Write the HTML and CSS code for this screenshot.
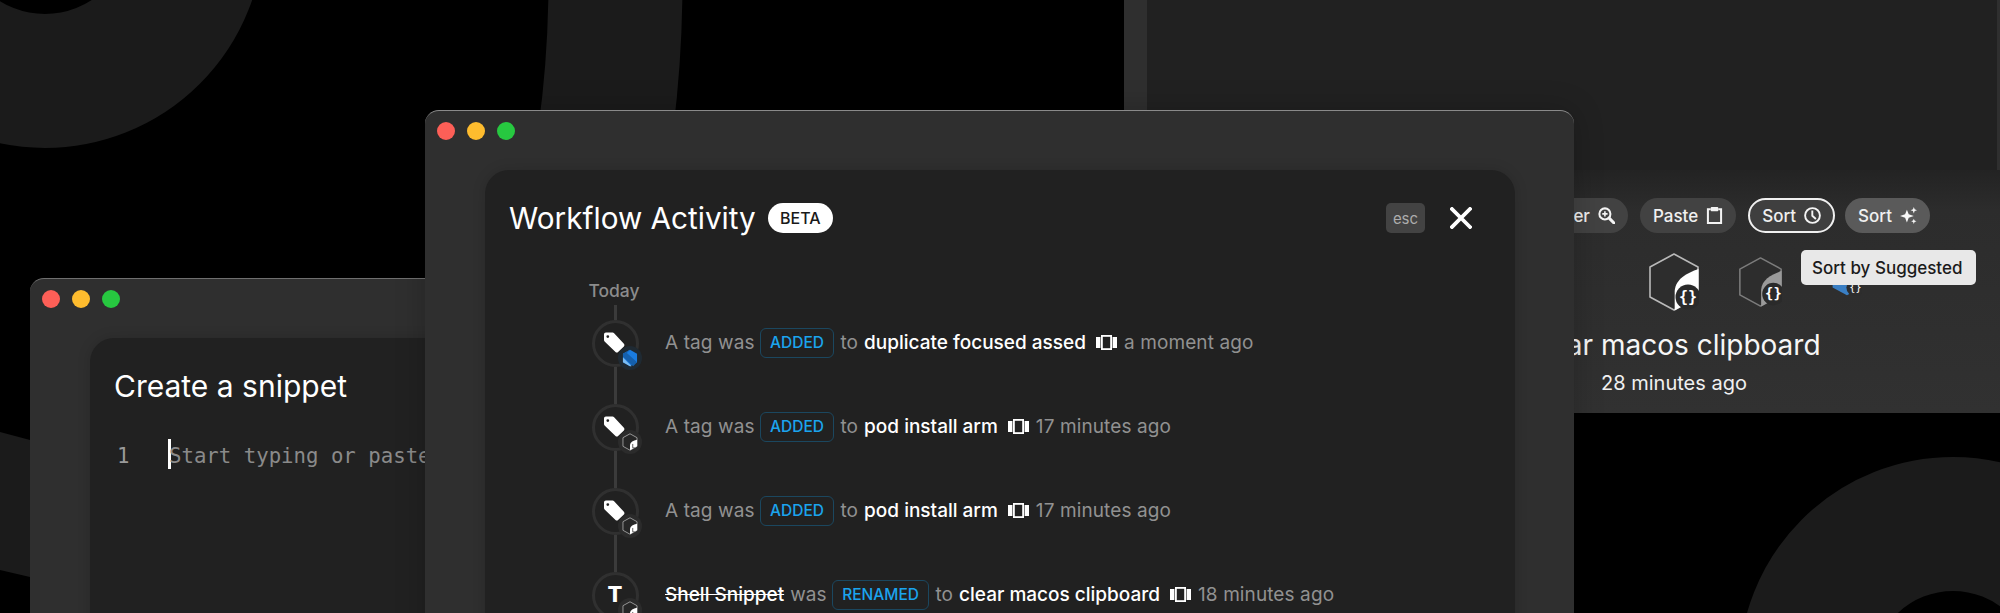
FILE: index.html
```html
<!DOCTYPE html>
<html lang="en">
<head>
<meta charset="utf-8">
<title>Workflow Activity</title>
<link rel="stylesheet" href="styles.css">
</head>
<body>
<svg width="0" height="0" class="defs" aria-hidden="true">
  <symbol id="movie" viewBox="0 0 21 15">
    <rect x="0" y="2" width="4.400" height="11" fill="#fff"/>
    <rect x="5.900" y=".9" width="9.200" height="13.200" fill="none" stroke="#fff" stroke-width="1.800"/>
    <rect x="16.600" y="2" width="4.400" height="11" fill="#fff"/>
  </symbol>
  <symbol id="tag" viewBox="0 0 22 21">
    <path fill="#fff" fill-rule="evenodd" d="M1 2.500C1 1.400 1.800.6 2.900.6H9.600c.6 0 1.100.2 1.500.6l9.800 10.600c.7.8.7 1.900 0 2.600l-5.800 5.600c-.8.7-1.900.7-2.600-.1L1.600 9.400C1.200 9 1 8.500 1 7.900ZM4.800 3.200a1.400 1.400 0 1 0 0 2.800 1.400 1.400 0 0 0 0-2.800Z"/>
  </symbol>
  <symbol id="minihex" viewBox="0 0 20 23">
    <path d="M10 1 19 6V17L10 22 1 17V6Z" fill="#262626" stroke="#a8a8a8" stroke-width="1.100" stroke-linejoin="round"/>
    <path d="M19 8.500C14 9.500 10.500 11.500 10 15V22L19 17Z" fill="#fff"/>
    <path d="M13.500 14V19H16" fill="none" stroke="#333" stroke-width="1"/>
  </symbol>
  <symbol id="bluehex" viewBox="0 0 20 23">
    <path d="M10 1 19 6V17L10 22 1 17V6Z" fill="#1a7ce0"/>
    <path d="M10 1 1 6V10L14 22 19 17 6 5Z" fill="#1560ad"/>
    <path d="M1 11 12 22H10L1 17Z" fill="#7cbcf2"/>
  </symbol>
</svg>

<svg class="backdrop" viewBox="0 0 2000 613" aria-hidden="true">
  <circle class="ring" cx="45" cy="-71" r="152"/>
  <circle class="ring" cx="-517" cy="-20" r="1132.500"/>
  <circle class="ring" cx="1953" cy="671" r="147"/>
  <polygon class="ring-fill" points="0,432 30,440 30,577 0,570"/>
</svg>

<section class="window back-window">
  <div class="back-panel"></div>
  <div class="back-footer">
    <div class="toolbar">
      <span class="pill">Filter
        <svg class="pill-icon" viewBox="0 0 16 16"><circle cx="6.500" cy="6.500" r="5.200" fill="none" stroke="#f4f4f4" stroke-width="1.900"/><path d="M10.500 10.500 15 15" stroke="#f4f4f4" stroke-width="2.800" stroke-linecap="round"/><path d="M6.500 4V9M4 6.500H9" stroke="#f4f4f4" stroke-width="1.500"/></svg>
      </span>
      <span class="pill">Paste
        <svg class="pill-icon" viewBox="0 0 16 16"><path d="M4.500 2.200H1.800V15.100H14.200V2.200H11.500" fill="none" stroke="#f4f4f4" stroke-width="1.900"/><rect x="4.500" y="0" width="7" height="4" rx=".7" fill="#f4f4f4"/></svg>
      </span>
      <span class="pill pill-active">Sort
        <svg class="pill-icon" viewBox="0 0 17 17"><circle cx="8.500" cy="8.500" r="7.400" fill="none" stroke="#f4f4f4" stroke-width="1.900"/><path d="M8.300 3.600V8.800L11.900 12" fill="none" stroke="#f4f4f4" stroke-width="1.900"/></svg>
      </span>
      <span class="pill pill-light">Sort
        <svg class="pill-icon" viewBox="0 0 16 16"><path d="M6.500 2.500 8.200 6.900 13 8.500 8.200 10.100 6.500 14.500 4.800 10.100 0 8.500 4.800 6.900Z" fill="#f7f7f7"/><path d="M13 0 13.800 2.200 16 3 13.800 3.800 13 6 12.200 3.800 10 3 12.200 2.200Z" fill="#f7f7f7"/><path d="M13 11 13.700 12.800 15.500 13.500 13.700 14.200 13 16 12.300 14.200 10.500 13.500 12.300 12.800Z" fill="#f7f7f7"/></svg>
      </span>
    </div>
    <div class="hex-row">
      <svg class="hex hex-lg" viewBox="0 0 50 58">
        <path d="M25 1 49 14V44L25 57 1 44V14Z" fill="#2d2d2d" stroke="#b9b9b9" stroke-width="1.600" stroke-linejoin="round"/>
        <path d="M49.500 16C38 20 26.500 26 25.700 38V57.500L49.500 44Z" fill="#fff"/>
        <circle cx="39" cy="44" r="12.500" fill="#2a2a2a"/>
        <text x="39" y="49" class="brace">{}</text>
      </svg>
      <svg class="hex hex-md" viewBox="0 0 50 58">
        <path d="M25 1 49 14V44L25 57 1 44V14Z" fill="#2d2d2d" stroke="#7c7c7c" stroke-width="1.800" stroke-linejoin="round"/>
        <path d="M49.500 16C38 20 26.500 26 25.700 38V57.500L49.500 44Z" fill="#9a9a9a"/>
        <circle cx="40" cy="43" r="13" fill="#2a2a2a"/>
        <text x="40" y="48" class="brace">{}</text>
      </svg>
      <svg class="hex hex-sm" viewBox="0 0 50 58">
        <path d="M25 1 49 14V44L25 57 1 44V14Z" fill="#3a7fc4"/>
        <circle cx="39" cy="44" r="15" fill="#2d2d2d"/>
        <text x="39" y="49.500" class="brace">{}</text>
      </svg>
    </div>
    <h2 class="asset-title">clear macos clipboard</h2>
    <p class="asset-time">28 minutes ago</p>
    <div class="tooltip">Sort by Suggested</div>
  </div>
</section>

<section class="window snippet-window">
  <div class="traffic"><i class="dot red"></i><i class="dot amber"></i><i class="dot green"></i></div>
  <div class="panel snippet-panel">
    <h1 class="title">Create a snippet</h1>
    <div class="editor">
      <span class="line-no">1</span>
      <span class="caret"></span>
      <span class="placeholder">Start typing or paste</span>
    </div>
  </div>
</section>

<section class="window main-window">
  <div class="traffic"><i class="dot red"></i><i class="dot amber"></i><i class="dot green"></i></div>
  <div class="panel main-panel">
    <header class="main-head">
      <h1 class="title title-main">Workflow Activity</h1>
      <span class="beta">BETA</span>
      <span class="esc">esc</span>
      <svg class="close" viewBox="0 0 22 22"><path d="M2 2 20 20M20 2 2 20" stroke="#fff" stroke-width="3.800" stroke-linecap="square"/></svg>
    </header>
    <div class="timeline">
      <div class="day"><span class="day-label">Today</span><i class="stem"></i></div>

      <div class="row">
        <div class="node-col">
          <div class="node">
            <svg class="tag"><use href="#tag"/></svg>
            <span class="mini mini-blue"><svg><use href="#bluehex"/></svg></span>
          </div>
          <i class="link"></i>
        </div>
        <div class="line">
          <span class="muted">A tag was</span><span class="chip">ADDED</span><span class="muted">to</span><span class="name">duplicate focused assed</span>
          <svg class="movie"><use href="#movie"/></svg><span class="muted">a moment ago</span>
        </div>
      </div>

      <div class="row">
        <div class="node-col">
          <div class="node">
            <svg class="tag"><use href="#tag"/></svg>
            <span class="mini"><svg><use href="#minihex"/></svg></span>
          </div>
          <i class="link"></i>
        </div>
        <div class="line">
          <span class="muted">A tag was</span><span class="chip">ADDED</span><span class="muted">to</span><span class="name">pod install arm</span>
          <svg class="movie"><use href="#movie"/></svg><span class="muted">17 minutes ago</span>
        </div>
      </div>

      <div class="row">
        <div class="node-col">
          <div class="node">
            <svg class="tag"><use href="#tag"/></svg>
            <span class="mini"><svg><use href="#minihex"/></svg></span>
          </div>
          <i class="link"></i>
        </div>
        <div class="line">
          <span class="muted">A tag was</span><span class="chip">ADDED</span><span class="muted">to</span><span class="name">pod install arm</span>
          <svg class="movie"><use href="#movie"/></svg><span class="muted">17 minutes ago</span>
        </div>
      </div>

      <div class="row">
        <div class="node-col">
          <div class="node">
            <span class="node-t">T</span>
            <span class="mini"><svg><use href="#minihex"/></svg></span>
          </div>
        </div>
        <div class="line">
          <span class="name strike">Shell Snippet</span><span class="muted">was</span><span class="chip">RENAMED</span><span class="muted">to</span><span class="name">clear macos clipboard</span>
          <svg class="movie"><use href="#movie"/></svg><span class="muted">18 minutes ago</span>
        </div>
      </div>
    </div>
  </div>
</section>
</body>
</html>
```
FILE: styles.css
```css
* { box-sizing: border-box; }
html, body { margin: 0; height: 100%; }
body {
  position: relative;
  width: 2000px;
  height: 613px;
  overflow: hidden;
  background: #000;
  color: #fff;
  font-family: Inter, "Liberation Sans", sans-serif;
}
.defs { position: absolute; }
.backdrop { position: absolute; inset: 0; width: 2000px; height: 613px; }
.ring { fill: none; stroke: #1b1b1b; stroke-width: 134; }
.ring-fill { fill: #1b1b1b; }

.window {
  position: absolute;
  background: #2f2f2f;
  border-radius: 14px 14px 0 0;
}

/* back window, top right */
.back-window {
  left: 1124px;
  top: -200px;
  width: 1100px;
  height: 613px;
  border-radius: 0;
  display: flex;
  flex-direction: column;
}
.back-panel {
  flex: none;
  height: 370px;
  margin: 0 227px 0 23px;
  background: #212121;
}
.back-footer {
  position: relative;
  flex: 1;
  background: linear-gradient(#232323 0, #2c2c2c 40px, #313131 100%);
}
.toolbar {
  display: flex;
  justify-content: flex-end;
  gap: 12px;
  padding: 28px 294px 0 0;
}
.pill {
  display: flex;
  align-items: center;
  gap: 8px;
  height: 35px;
  padding: 0 13px;
  border-radius: 18px;
  background: #424242;
  color: #f0f0f0;
  font-size: 17px;
  font-weight: 500;
}
.pill-active { background: #3f3f3f; border: 2px solid #f0f0f0; padding: 0 12px; margin-right: -2px; }
.pill-light { background: #5a5a5a; }
.pill-icon { width: 17px; height: 17px; flex: none; }

.hex-row { display: flex; align-items: flex-start; margin: 20px 0 0 525px; }
.hex { display: block; flex: none; }
.hex-lg { width: 50px; height: 58px; }
.hex-md { width: 43px; height: 50px; margin: 4px 0 0 40px; }
.hex-sm { width: 30px; height: 35px; margin: 8px 0 0 50px; }
.brace { font: 700 15px "DejaVu Sans Mono", monospace; fill: #fff; text-anchor: middle; }
.hex-md .brace { font-size: 16px; }
.hex-sm .brace { font-size: 17px; font-weight: 400; }

.asset-title {
  margin: 17px 0 0;
  font-size: 28px;
  line-height: 34px;
  font-weight: 400;
  text-align: center;
  color: #f6f6f6;
}
.asset-time {
  margin: 9px 0 0;
  font-size: 20px;
  line-height: 24px;
  font-weight: 400;
  text-align: center;
  color: #f0f0f0;
}
.tooltip {
  position: absolute;
  left: 677px;
  top: 80px;
  width: 175px;
  height: 35px;
  padding-left: 11px;
  display: flex;
  align-items: center;
  border-radius: 5px;
  background: #e8e8e8;
  color: #1b1b1b;
  font-size: 17px;
  font-weight: 500;
  white-space: nowrap;
}

/* shared window parts */
.snippet-window { left: 30px; top: 278px; width: 560px; height: 400px; border-top: 1px solid #6f6f6f; }
.main-window {
  left: 425px;
  top: 110px;
  width: 1149px;
  height: 560px;
  border-top: 1px solid #8a8a8a;
  box-shadow: 0 0 30px rgba(0, 0, 0, .22);
}
.traffic { display: flex; gap: 12px; height: 59px; padding: 11px 0 0 12px; }
.dot { width: 18px; height: 18px; border-radius: 50%; }
.red { background: #fd5f57; }
.amber { background: #febc2e; }
.green { background: #27c840; }
.panel {
  height: 100%;
  margin-left: 60px;
  background: #212121;
  border-radius: 24px 24px 0 0;
  box-shadow: 0 0 14px rgba(0, 0, 0, .14);
}
.main-panel { margin-right: 59px; padding: 33px 0 0 24px; }
.snippet-panel { padding: 33px 0 0 24px; }
.title { margin: 0; font-size: 30px; line-height: 30px; font-weight: 400; color: #fff; white-space: nowrap; }
.title-main { font-size: 29.700px; }

.editor {
  display: flex;
  align-items: center;
  margin-top: 38px;
  height: 30px;
  font: 20.700px/30px "DejaVu Sans Mono", monospace;
}
.line-no { width: 54px; padding: 4px 0 0 3px; color: #9a9a9a; }
.caret { width: 3px; height: 30px; margin-right: -2px; background: #fff; flex: none; }
.placeholder { padding-top: 4px; color: #8a8a8a; white-space: nowrap; }

/* main header */
.main-head { display: flex; align-items: center; height: 30px; padding-right: 43px; }
.beta {
  margin-left: 12px;
  width: 65px;
  height: 30px;
  display: flex;
  align-items: center;
  justify-content: center;
  background: #fff;
  color: #1a1a1a;
  border-radius: 15px;
  font-size: 16px;
  font-weight: 500;
}
.esc {
  margin-left: auto;
  width: 39px;
  height: 30px;
  display: flex;
  align-items: center;
  justify-content: center;
  background: #434343;
  color: #adadad;
  border-radius: 5px;
  font-size: 15px;
}
.close { width: 22px; height: 22px; margin-left: 25px; }

/* timeline */
.timeline { margin: 48px 0 0 82px; }
.day { width: 48px; display: flex; flex-direction: column; align-items: center; }
.day-label { padding-right: 2px; font-size: 17.500px; line-height: 20px; font-weight: 500; color: #8c8c8c; }
.stem { width: 3px; height: 15px; margin-top: 4px; background: #3b3b3b; }
.row { display: flex; gap: 26px; height: 84px; }
.node-col { width: 48px; flex: none; display: flex; flex-direction: column; align-items: center; }
.node {
  position: relative;
  flex: none;
  width: 47px;
  height: 47px;
  display: flex;
  align-items: center;
  justify-content: center;
  border: 3px solid #303030;
  border-radius: 50%;
}
.link { width: 3px; flex: 1; background: #3b3b3b; }
.tag { width: 22px; height: 21px; margin: -2px 0 0 -2px; }
.node-t { font-size: 22px; line-height: 22px; font-weight: 800; color: #fff; margin-top: -3px; }
.mini {
  position: absolute;
  left: 23px;
  top: 23px;
  width: 24px;
  height: 24px;
  display: flex;
  align-items: center;
  justify-content: center;
  border-radius: 50%;
  background: #2b2b2b;
}
.mini svg { width: 16px; height: 18px; display: block; }
.mini-blue { background: #1f2a33; }

.line {
  display: flex;
  align-items: center;
  gap: 6px;
  height: 45px;
  font-size: 19px;
  line-height: 24px;
  white-space: nowrap;
}
.muted { color: #919191; letter-spacing: .1px; }
.name { color: #fff; font-weight: 500; }
.strike { text-decoration: line-through; }
.chip {
  height: 30px;
  margin-left: -1px;
  padding: 0 9.500px;
  display: flex;
  align-items: center;
  border: 1.500px solid #1b475f;
  border-radius: 6px;
  color: #1ba4ee;
  font-size: 15.500px;
  font-weight: 500;
}
.movie { width: 21px; height: 15px; flex: none; margin: 0 1px 0 4px; }
```
